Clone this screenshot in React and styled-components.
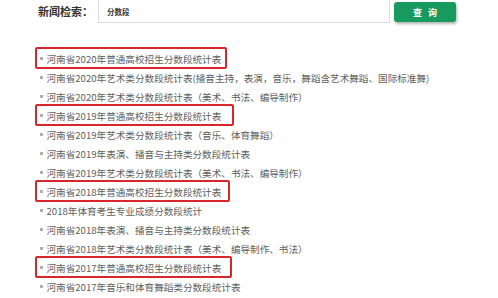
import React from "react";
import styled, { createGlobalStyle } from "styled-components";

const items = [
  { text: "河南省2020年普通高校招生分数段统计表", mark: 6 },
  { text: "河南省2020年艺术类分数段统计表(播音主持，表演，音乐，舞蹈含艺术舞蹈、国际标准舞)" },
  { text: "河南省2020年艺术类分数段统计表（美术、书法、编导制作）" },
  { text: "河南省2019年普通高校招生分数段统计表", mark: 13 },
  { text: "河南省2019年艺术类分数段统计表（音乐、体育舞蹈）" },
  { text: "河南省2019年表演、播音与主持类分数段统计表" },
  { text: "河南省2019年艺术类分数段统计表（美术、书法、编导制作）" },
  { text: "河南省2018年普通高校招生分数段统计表", mark: 9 },
  { text: "2018年体育考生专业成绩分数段统计" },
  { text: "河南省2018年表演、播音与主持类分数段统计表" },
  { text: "河南省2018年艺术类分数段统计表（美术、编导制作、书法）" },
  { text: "河南省2017年普通高校招生分数段统计表", mark: 11 },
  { text: "河南省2017年音乐和体育舞蹈类分数段统计表" },
];

const App = () => {
  return (
    <Page>
      <GlobalStyle />
      <SearchBar>
        <Label>新闻检索：</Label>
        <SearchInput type="text" defaultValue="分数段" />
        <SearchButton>查 询</SearchButton>
      </SearchBar>
      <List>
        {items.map((item, i) => (
          <Item key={i} $mark={item.mark}>
            {item.text}
          </Item>
        ))}
      </List>
    </Page>
  );
};

export default App;

const GlobalStyle = createGlobalStyle`
  body {
    margin: 0;
    background: #fff;
    font-family: "Noto Sans CJK SC", "Noto Sans", sans-serif;
  }
`;

const Page = styled.div`
  width: 498px;
  height: 298px;
  overflow: hidden;
  padding-left: 38px;
  box-sizing: border-box;
`;

const SearchBar = styled.div`
  display: flex;
  align-items: center;
  height: 24px;
  margin-top: -1px;
`;

const Label = styled.span`
  width: 60px;
  font-size: 11px;
  font-weight: bold;
  color: #333;
  line-height: 24px;
`;

const SearchInput = styled.input`
  width: 292px;
  height: 24px;
  box-sizing: border-box;
  border: 1px solid #dcdcdc;
  padding: 0 0 0 8px;
  font-family: inherit;
  font-size: 7.5px;
  font-weight: bold;
  color: #333;
  outline: none;
`;

const SearchButton = styled.button`
  margin-left: 4px;
  margin-top: 2px;
  width: 62px;
  height: 20px;
  border: none;
  border-radius: 3px;
  background: #179a5d;
  color: #fff;
  font-family: inherit;
  font-size: 9px;
  font-weight: bold;
  letter-spacing: 2px;
  padding: 0 0 0 2px;
  box-shadow: 1px 2px 3px rgba(0, 0, 0, 0.3);
`;

const List = styled.ul`
  list-style: none;
  margin: 0;
  padding: 26px 0 0 2px;
`;

const Item = styled.li`
  position: relative;
  display: flex;
  align-items: center;
  width: fit-content;
  height: 19px;
  font-size: 9.6px;
  color: #606060;
  white-space: nowrap;

  &::before {
    content: "";
    width: 3px;
    height: 3px;
    margin-right: 3.5px;
    background: #b0b0b0;
  }

  &::after {
    content: "";
    display: ${(p) => (p.$mark ? "block" : "none")};
    position: absolute;
    left: -5px;
    right: -${(p) => p.$mark || 0}px;
    top: -2px;
    bottom: -1px;
    border: 2px solid #d8262c;
    border-radius: 2px;
  }
`;
